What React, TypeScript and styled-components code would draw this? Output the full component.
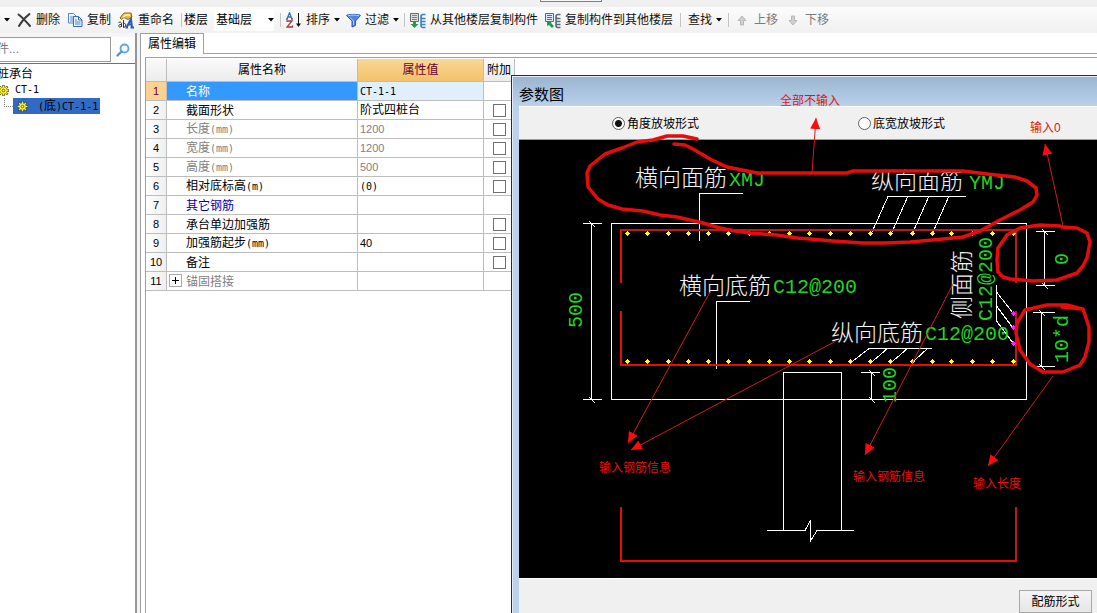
import React from "react";
import styled, { createGlobalStyle, css } from "styled-components";

const GlobalStyle = createGlobalStyle`
  *, *::before, *::after { box-sizing: border-box; }
  html, body, #root { height: 100%; margin: 0; }
  body {
    background: #ffffff;
    color: #000000;
    font: 12px/16px "Liberation Sans", "Noto Sans CJK SC", sans-serif;
    overflow: hidden;
  }
  button, input, select { font: inherit; color: inherit; margin: 0; }
`;

/* ---------- shared text ---------- */

const Latin = styled.span`
  font-family: "DejaVu Sans Mono", monospace;
  font-size: 10px;
`;

const Digits = styled.span`
  font-family: "Liberation Sans", sans-serif;
  font-size: 11px;
`;

/* Numbers and half-width runs get their own narrow faces, the rest the CJK face. */
const Mixed = ({ text }: { text: string }) => (
  <>
    {/^\d+$/.test(text) ? (
      <Digits>{text}</Digits>
    ) : (
      text.split(/([\x20-\x7e]+)/).map((part, i) => (i % 2 ? <Latin key={i}>{part}</Latin> : part))
    )}
  </>
);

/* ---------- frame ---------- */

const Frame = styled.div`
  display: flex;
  flex-direction: column;
  height: 100vh;
  overflow: hidden;
`;

const TopStrip = styled.div`
  display: flex;
  flex: none;
  height: 7px;
  padding-left: 540px;
  background: #f0f0f0;
`;

const StripTab = styled.div`
  width: 62px;
  height: 2px;
  border: 1px solid #808080;
  border-top: 0;
  background: #f8f8f8;
`;

const Toolbar = styled.div`
  display: flex;
  flex: none;
  align-items: center;
  height: 26px;
  margin-left: -24px;
  background: linear-gradient(#fcfcfc, #f0f0f0);
`;

const ToolButton = styled.button<{ $width: number; $muted?: boolean }>`
  display: flex;
  flex: none;
  align-items: center;
  gap: 4px;
  width: ${(p) => p.$width}px;
  height: 22px;
  padding: 0;
  border: 0;
  background: none;
  white-space: nowrap;
  color: ${(p) => (p.$muted ? "#7c7c7c" : "#111111")};
  svg { flex: none; }
`;

const Divider = styled.span<{ $gap?: number }>`
  flex: none;
  width: 1px;
  height: 14px;
  margin-right: ${(p) => p.$gap ?? 5}px;
  background: #c4c4c4;
`;

const FloorField = styled.label`
  display: flex;
  flex: none;
  align-items: center;
  gap: 6px;
  width: 96px;
`;

const SelectBox = styled.span`
  display: flex;
  align-items: center;
  width: 60px;
  height: 22px;
  padding-left: 2px;
  background: #ffffff;
`;

const FloorSelect = styled.select`
  appearance: none;
  width: 52px;
  padding: 0;
  border: 0;
  background: none;
`;

const Body = styled.div`
  display: flex;
  flex: 1;
  min-height: 0;
`;

/* ---------- sidebar ---------- */

const Sidebar = styled.aside`
  display: flex;
  flex: none;
  flex-direction: column;
  width: 165px;
  margin-left: -28px;
  padding-top: 4px;
  border-right: 2px solid #969696;
  background: #f6f6f6;
`;

const SearchRow = styled.div`
  display: flex;
  flex: none;
  height: 27px;
  border-bottom: 1px solid #707070;
  background: #ffffff;
`;

const SearchInput = styled.input`
  width: 139px;
  height: 25px;
  padding: 0 0 1px 12px;
  border: 1px solid #9a9a9a;
  background: #ffffff;
  &::placeholder { color: #777777; opacity: 1; }
`;

const SearchButton = styled.button`
  display: flex;
  flex: 1;
  align-items: center;
  justify-content: center;
  padding: 0;
  border: 0;
  background: none;
`;

const Tree = styled.ul`
  flex: 1;
  margin: 0;
  padding: 2px 0 0 25px;
  background: #ffffff;
  list-style: none;
`;

const TreeRow = styled.li<{ $depth: number }>`
  display: flex;
  align-items: center;
  height: 16px;
  padding-left: ${(p) => [0, 1, 7][p.$depth]}px;
  white-space: nowrap;
`;

const TreeNode = styled.span<{ $selected?: boolean }>`
  display: flex;
  align-items: center;
  gap: 6px;
  height: 16px;
  ${(p) =>
    p.$selected &&
    css`
      gap: 10px;
      width: 87px;
      padding-left: 4px;
      background: #316ac5;
    `}
`;

const Branch = styled.span`
  width: 9px;
  height: 9px;
  margin-bottom: 8px;
  border-left: 1px dotted #808080;
  border-bottom: 1px dotted #808080;
`;

const Splitter = styled.div`
  flex: none;
  width: 3px;
  background: #f2f2f2;
`;

/* ---------- property editor ---------- */

const Main = styled.main`
  position: relative;
  display: flex;
  flex: 1;
  flex-direction: column;
  min-width: 0;
  background: #ffffff;
`;

const TabStrip = styled.div`
  display: flex;
  flex: none;
  height: 21px;
  &::after {
    content: "";
    flex: 1;
    border-bottom: 1px solid #a0a0a0;
  }
`;

const Tab = styled.button`
  width: 64px;
  padding: 0;
  border: 1px solid #a0a0a0;
  border-bottom: 0;
  background: #ffffff;
`;

const TabBody = styled.div`
  flex: 1;
  padding: 3px 0 0 4px;
  border-left: 1px solid #a0a0a0;
`;

const GridFrame = styled.div`
  height: 100%;
  padding-top: 1px;
  border-top: 1px solid #a0a0a0;
  border-left: 1px solid #a0a0a0;
`;

const Table = styled.table`
  width: 369px;
  border-collapse: separate;
  border-spacing: 0;
  table-layout: fixed;
  th, td {
    padding: 0;
    border-right: 1px solid #bdbdbd;
    border-bottom: 1px solid #bdbdbd;
    font-weight: normal;
    white-space: nowrap;
  }
`;

const HeadCell = styled.th<{ $active?: boolean }>`
  height: 23px;
  line-height: 22px;
  background: ${(p) =>
    p.$active ? "linear-gradient(#fad795, #f2c26c)" : "linear-gradient(#fafafa, #ececec)"};
  color: ${(p) => (p.$active ? "#66002e" : "#000000")};
`;

const NumberCell = styled.th<{ $active?: boolean }>`
  height: 19px;
  line-height: 14px;
  background: ${(p) =>
    p.$active ? "#fdd291" : "linear-gradient(90deg, #ffffff, #efefef)"};
  color: ${(p) => (p.$active ? "#66002e" : "#000000")};
`;

type Tone = "plain" | "muted" | "link" | "selected";

const toneColor: Record<Tone, string> = {
  plain: "#000000",
  muted: "#808080",
  link: "#0000b4",
  selected: "#ffffff",
};

const NameCell = styled.td<{ $tone: Tone }>`
  background: ${(p) => (p.$tone === "selected" ? "#3399ff" : "#ffffff")};
  color: ${(p) => toneColor[p.$tone]};
`;

const NameLine = styled.div`
  display: flex;
  align-items: flex-end;
  height: 18px;
`;

const Gutter = styled.span`
  display: flex;
  width: 19px;
  padding: 0 0 3px 2px;
`;

const ExpandButton = styled.button`
  display: flex;
  align-items: center;
  justify-content: center;
  width: 13px;
  height: 13px;
  padding: 0;
  border: 1px solid #a8a8a8;
  background: #ffffff;
`;

const ValueCell = styled.td<{ $tone: Tone }>`
  background: ${(p) => (p.$tone === "selected" ? "#e0effe" : "#ffffff")};
  color: ${(p) => (p.$tone === "muted" ? "#808080" : "#000000")};
`;

const ValueText = styled.div`
  height: 18px;
  padding-left: 2px;
  line-height: 18px;
  white-space: pre;
`;

const CheckCell = styled.td`
  text-align: center;
  line-height: 0;
`;

const CheckBox = styled.input`
  appearance: none;
  width: 13px;
  height: 13px;
  border: 1px solid #707070;
  background: #ffffff;
`;

/* ---------- parameter window ---------- */

const ParamWindow = styled.section`
  position: absolute;
  top: 42px;
  right: 0;
  bottom: 0;
  left: 371px;
  display: flex;
  flex-direction: column;
  padding-left: 7px;
  border-top: 1px solid #2a2a38;
  border-left: 1px solid #2a2a38;
  background: linear-gradient(#9ab4d1, #b9d1ea 30px);
  box-shadow: inset 1px 1px 0 #e4edf7;
`;

const WindowTitle = styled.h2`
  flex: none;
  height: 30px;
  margin: 0;
  padding-top: 9px;
  font-size: 15px;
  line-height: 20px;
  font-weight: normal;
`;

const Options = styled.div`
  display: flex;
  flex: none;
  align-items: center;
  gap: 159px;
  height: 34px;
  padding: 1px 0 0 93px;
  border-top: 1px solid #ffffff;
  border-bottom: 1px solid #9a9a9a;
  background: #f0f0f0;
`;

const Option = styled.label`
  display: flex;
  align-items: center;
  gap: 2px;
  white-space: nowrap;
`;

const Radio = styled.input`
  appearance: none;
  width: 13px;
  height: 13px;
  border: 1px solid #606060;
  border-radius: 50%;
  background: #ffffff;
  &:checked { background: radial-gradient(circle, #111111 3px, #ffffff 4px); }
`;

const Canvas = styled.div`
  flex: 1;
  min-height: 0;
  background: #000000;
  svg {
    display: block;
    overflow: visible;
    pointer-events: none;
  }
`;

const WindowFooter = styled.footer`
  display: flex;
  flex: none;
  justify-content: flex-end;
  height: 35px;
  padding: 11px 5px 0 0;
  border-top: 1px solid #ffffff;
  background: #f0f0f0;
`;

const PushButton = styled.button`
  width: 73px;
  height: 23px;
  padding: 0;
  border: 1px solid #a8a8a8;
  background: linear-gradient(#f4f4f4, #e6e6e6);
`;

/* ---------- icons ---------- */

const Caret = () => (
  <svg width="6" height="4" viewBox="0 0 6 4" aria-hidden="true">
    <path d="M0 0h6L3 3.5z" fill="#000" />
  </svg>
);

const DeleteIcon = () => (
  <svg width="15" height="16" viewBox="0 0 15 16" aria-hidden="true">
    <path d="M1.500 2.500C5 5 9.500 10 13 14M12.500 2C8.500 5 4.500 9.500 2 14" fill="none" stroke="#3a3a3a" strokeWidth="2" strokeLinecap="round" />
  </svg>
);

const CopyIcon = () => (
  <svg width="16" height="16" viewBox="0 0 16 16" aria-hidden="true">
    <path d="M1.500 1.500h5l3 3v6.500h-8z" fill="#eef4fd" stroke="#5c86c0" />
    <path d="M3 5h4M3 7h4M3 9h3" stroke="#5c8fd6" />
    <path d="M6.500 4.500h5l3.500 3.500v6.500h-8.500z" fill="#eef4fd" stroke="#3c69b0" />
    <path d="M11.500 4.500V8H15" fill="none" stroke="#3c69b0" />
    <path d="M8 8h2M8 10h5.500M8 12h5.500" stroke="#4a80d0" />
  </svg>
);

const RenameIcon = () => (
  <svg width="16" height="17" viewBox="0 0 16 17" aria-hidden="true">
    <path d="M2 6l2.500-3.500L6 1h7l1 4-4 2.500-4-2-2.500 2z" fill="#e8b93c" stroke="#8a6a20" />
    <path d="M6.500 3H12M5 5l2-1" stroke="#fff3b8" strokeWidth="1.500" />
    <path d="M.5 10.500c2-1 3 0 3 1V15M3.500 12.500c-3-.5-3.500 2-2 2.500 1 0 2-.5 2-1M5.500 8v7.500M5.500 11.500c3-1 3 4 0 4" fill="none" stroke="#333" />
    <path d="M8.500 15.500L13 7l1 8.500M10.500 12.500h4M12.500 15.500H16M7.500 15.500H10" fill="none" stroke="#2a5cc0" strokeWidth="2" />
  </svg>
);

const SortIcon = () => (
  <svg width="16" height="16" viewBox="0 0 16 16" aria-hidden="true">
    <path d="M1 7L3.500 .8 6 7M2 5h3M0 7h2M5 7h2" fill="none" stroke="#3b6ea8" strokeWidth="1.300" />
    <path d="M1 10V9h5l-5 6h5.500v-1.500" fill="none" stroke="#a83a3a" strokeWidth="1.300" />
    <path d="M12.500 1v12" stroke="#111" />
    <path d="M10 11.500h5L12.500 15z" fill="#111" />
  </svg>
);

const FilterIcon = () => (
  <svg width="15" height="15" viewBox="0 0 15 15" aria-hidden="true">
    <path d="M.5 2.500C.5 1 14.500 1 14.500 2.500L9.500 8v4.500L6 14V8z" fill="#4f83e4" stroke="#2b59b8" />
    <path d="M2 2.800c3-1 8-1 11 0M4 4.500L7.500 8v4" fill="none" stroke="#b9d3ff" />
  </svg>
);

const FloorCopyIcon = ({ out }: { out?: boolean }) => (
  <svg width="16" height="17" viewBox="0 0 16 17" aria-hidden="true">
    <path d="M.5 1.500h8v8h-8z" fill={out ? "#dfeaff" : "#dedede"} stroke={out ? "#3c69c0" : "#6a6a6a"} />
    <path d="M2 3.500h5M2 5.500h5M2 7.500h5" stroke={out ? "#2f6fe0" : "#808080"} />
    <path d={out ? "M2 10l5-1-1 2 3 3-2 2-3-3-2 1z" : "M3 10v2H.5L4.500 16l4-4H6v-2z"} fill="#229a48" />
    <path
      d="M15.500 2.500H13q-2 0-2 2t2 2h2.500M11 4.500v9q0 2 2 2h2.500M11.500 9.500h4M11.500 12.500h4M12 6.500h3.500"
      fill="none"
      stroke={out ? "#5b6a78" : "#3b82c4"}
      strokeWidth="1.600"
    />
  </svg>
);

const MoveIcon = ({ down }: { down?: boolean }) => (
  <svg width="14" height="11" viewBox="-1 0 14 11" aria-hidden="true">
    <path d={down ? "M5 10L1 5.500h2.500V1h3v4.500H9z" : "M5 1L1 5.500h2.500V10h3V5.500H9z"} fill="#cfcfcf" stroke="#b8b8b8" />
  </svg>
);

const SearchIcon = () => (
  <svg width="14" height="14" viewBox="0 0 14 14" aria-hidden="true">
    <circle cx="8.500" cy="5.500" r="4" fill="#f4faff" stroke="#5aa5e0" strokeWidth="1.800" />
    <path d="M5.500 8.500L1.500 12.500" stroke="#4b97d8" strokeWidth="2.400" strokeLinecap="round" />
  </svg>
);

const GearIcon = () => (
  <svg width="11" height="11" viewBox="0 0 11 11" aria-hidden="true">
    <path d="M5.500 0v11M0 5.500h11M1.500 1.500l8 8M9.500 1.500l-8 8" stroke="#3a3a00" strokeWidth="2.400" />
    <path d="M5.500 .5v10M.5 5.500h10M2 2l7 7M9 2l-7 7" stroke="#ffee20" strokeWidth="1.400" />
    <circle cx="5.500" cy="5.500" r="3.200" fill="#ffee20" />
    <circle cx="5.500" cy="5.500" r="1.300" fill="#fff" stroke="#4a4a00" strokeWidth=".8" />
  </svg>
);

const PlusIcon = () => (
  <svg width="7" height="7" viewBox="0 0 7 7" aria-hidden="true">
    <path d="M3.500 0v7M0 3.500h7" stroke="#000" />
  </svg>
);

/* ---------- drawing ---------- */

const CadLabel = styled.text`
  fill: #f4f4f4;
  font-family: "Noto Sans CJK SC", sans-serif;
  font-size: 23px;
  font-weight: 300;
`;

const CadValue = styled.text`
  fill: #22d422;
  font-family: "Liberation Mono", monospace;
  font-size: 20px;
`;

const Note = styled.text`
  fill: #e01414;
  font-family: "Liberation Sans", "Noto Sans CJK SC", sans-serif;
  font-size: 12px;
`;

const barXs = [
  627, 647, 668, 688, 708, 728, 749, 769, 789, 809, 830, 850, 870, 890, 912, 932, 951, 972, 992, 1013,
];

const Dot = ({ x, y, fill }: { x: number; y: number; fill: string }) => (
  <path d={`M${x - 2} ${y}h5v1h-5zM${x - 1} ${y - 1}h3v3h-3zM${x} ${y - 2}h1v5h-1z`} fill={fill} />
);

/* Vertical dimension line with a tick and a slash at both ends. */
const Dimension = ({ x, from, to, left, right }: { x: number; from: number; to: number; left: number; right: number }) => (
  <path
    d={`M${x}.5 ${from}V${to}M${left} ${from}.5H${right}M${left} ${to}.5H${right}M${x - 2} ${from - 2}l6 6M${x - 2} ${to - 2}l6 6`}
    fill="none"
    stroke="#fff"
  />
);

const arrows = [
  [812, 173, 816, 118],
  [1063, 226, 1045, 144],
  [1053, 376, 988, 466],
  [953, 284, 865, 455],
  [710, 292, 628, 443],
  [836, 341, 631, 450],
];

const FootingDrawing = () => (
  <svg width="578" height="438" viewBox="519 140 578 438" role="img" aria-label="参数图">
    <defs>
      <marker id="head" markerUnits="userSpaceOnUse" markerWidth="12" markerHeight="10" refX="11" refY="5" orient="auto">
        <path d="M0 0L11 5L0 10z" fill="#ff0a0a" />
      </marker>
    </defs>

    <g shapeRendering="crispEdges">
      <g fill="none" stroke="#fff">
        <path d="M611.500 223.500h415v176h-415z" />
        <path d="M743 193.500H699.500V241" />
        <path d="M750 301.500H716.500V369" />
        <path d="M966 196.500H888L872 232M908 196L892 232M929 196L913 232M949 196L933 232" />
        <path d="M932 348.500H869L853 361M888 348L873 361M908 348L893 361M928 348L914 361" />
        <path d="M996.500 285V321L1013 343M996.500 292L1013 313M996.500 306L1013 328" />
        <path d="M783.500 530V372.500H841.500V530" />
        <path d="M767 530.500H805L810.500 520V541L817 530.500H854" />
      </g>
      <Dimension x={591} from={223} to={399} left={583} right={602} />
      <Dimension x={871} from={372} to={399} left={861} right={880} />
      <Dimension x={1044} from={231} to={285} left={1036} right={1055} />
      <Dimension x={1041} from={312} to={366} left={1033} right={1055} />

      <g fill="none" strokeWidth="2">
        <path d="M620 230H1017M1016 230V283M1016 311V365M1016 507V561" stroke="#b81c1c" />
        <path d="M621 230V283M621 311V365H1017M621 507V561H1017" stroke="#ea0a0a" />
      </g>

      {barXs.map((x) => (
        <React.Fragment key={x}>
          <Dot x={x} y={233} fill="#ffff20" />
          <Dot x={x} y={361} fill="#ffff20" />
        </React.Fragment>
      ))}
      {[313, 327, 343].map((y) => (
        <Dot key={y} x={1013} y={y} fill="#ff20ff" />
      ))}
    </g>

    <CadLabel x="635" y="186">横向面筋</CadLabel>
    <CadValue x="729" y="186">XMJ</CadValue>
    <CadLabel x="871" y="189">纵向面筋</CadLabel>
    <CadValue x="969" y="189">YMJ</CadValue>
    <CadLabel x="679" y="294">横向底筋</CadLabel>
    <CadValue x="773" y="293">C12@200</CadValue>
    <CadLabel x="831" y="341">纵向底筋</CadLabel>
    <CadValue x="925" y="340">C12@200</CadValue>
    <CadLabel transform="translate(970 319) rotate(-90)">侧面筋</CadLabel>
    <CadValue transform="translate(992 321) rotate(-90)">C12@200</CadValue>
    <CadValue transform="translate(582 328) rotate(-90)">500</CadValue>
    <CadValue transform="translate(896 403) rotate(-90)">100</CadValue>
    <CadValue transform="translate(1068 265) rotate(-90)">0</CadValue>
    <CadValue transform="translate(1068 363) rotate(-90)">10*d</CadValue>

    <g fill="none" stroke="#e40c0c" strokeWidth="3.500" strokeLinejoin="round" strokeLinecap="round">
      <path d="M697 139L683 136H667L653 140L637 142L622 148L605 154L590 166L587 173L588 187L598 199L608 205L622 209L643 211L660 215L677 217L703 223L720 228L735 231L750 233L777 235L797 238L810 239L833 241L863 243H885L910 242L943 239L963 237L980 231L1000 220L1020 210L1033 202L1037 195L1036 188L1027 181L1015 177L987 174L963 171H853L847 173H757L727 167L710 159L693 149L685 145L674 144" />
      <path d="M1060 226L1040 225L1020 228L1007 235L998 248L997 260L998 272L1003 277L1010 279L1033 281L1057 280L1077 273L1083 266L1087 258L1090 242L1087 233L1077 228L1062 227" />
      <path d="M1062 307L1083 309L1089 327V342L1085 357L1080 365L1063 372H1043L1030 364L1020 350L1016 333L1017 323L1025 310L1047 305H1067L1082 309" />
    </g>

    {arrows.map(([x1, y1, x2, y2]) => (
      <line key={x2} x1={x1} y1={y1} x2={x2} y2={y2} stroke="#d01c1c" markerEnd="url(#head)" />
    ))}

    <Note x="780" y="105">全部不输入</Note>
    <Note x="1030" y="132">输入0</Note>
    <Note x="599" y="472">输入钢筋信息</Note>
    <Note x="853" y="481">输入钢筋信息</Note>
    <Note x="973" y="488">输入长度</Note>
  </svg>
);

/* ---------- data ---------- */

type Row = { name: string; value: string; tone: Tone; check: boolean; expandable?: boolean };

const rows: Row[] = [
  { name: "名称", value: "CT-1-1", tone: "selected", check: false },
  { name: "截面形状", value: "阶式四桩台", tone: "plain", check: true },
  { name: "长度(mm)", value: "1200", tone: "muted", check: true },
  { name: "宽度(mm)", value: "1200", tone: "muted", check: true },
  { name: "高度(mm)", value: "500", tone: "muted", check: true },
  { name: "相对底标高(m)", value: "(0)", tone: "plain", check: true },
  { name: "其它钢筋", value: "", tone: "link", check: false },
  { name: "承台单边加强筋", value: "", tone: "plain", check: true },
  { name: "加强筋起步(mm)", value: "40", tone: "plain", check: true },
  { name: "备注", value: "", tone: "plain", check: true },
  { name: "锚固搭接", value: "", tone: "muted", check: false, expandable: true },
];

export default function App() {
  return (
    <Frame>
      <GlobalStyle />
      <TopStrip>
        <StripTab />
      </TopStrip>
      <Toolbar role="toolbar">
        <ToolButton $width={41}>
          新建
          <Caret />
        </ToolButton>
        <ToolButton $width={50}><DeleteIcon />删除</ToolButton>
        <ToolButton $width={51}><CopyIcon />复制</ToolButton>
        <ToolButton $width={63}><RenameIcon />重命名</ToolButton>
        <Divider $gap={2} />
        <FloorField>
          楼层
          <SelectBox>
            <FloorSelect defaultValue="基础层">
              <option>基础层</option>
            </FloorSelect>
            <Caret />
          </SelectBox>
        </FloorField>
        <Divider />
        <ToolButton $width={60}><SortIcon />排序<Caret /></ToolButton>
        <ToolButton $width={58}><FilterIcon />过滤<Caret /></ToolButton>
        <Divider />
        <ToolButton $width={135}><FloorCopyIcon />从其他楼层复制构件</ToolButton>
        <ToolButton $width={135}><FloorCopyIcon out />复制构件到其他楼层</ToolButton>
        <Divider $gap={7} />
        <ToolButton $width={40}>查找<Caret /></ToolButton>
        <Divider $gap={7} />
        <ToolButton $width={51} $muted><MoveIcon />上移</ToolButton>
        <ToolButton $width={51} $muted><MoveIcon down />下移</ToolButton>
      </Toolbar>

      <Body>
        <Sidebar>
          <SearchRow>
            <SearchInput type="text" placeholder="构件..." aria-label="搜索构件" />
            <SearchButton aria-label="搜索"><SearchIcon /></SearchButton>
          </SearchRow>
          <Tree>
            <TreeRow $depth={0}>桩承台</TreeRow>
            <TreeRow $depth={1}>
              <TreeNode>
                <GearIcon />
                <Mixed text="CT-1" />
              </TreeNode>
            </TreeRow>
            <TreeRow $depth={2}>
              <Branch />
              <TreeNode $selected>
                <GearIcon />
                <span><Mixed text="(底)CT-1-1" /></span>
              </TreeNode>
            </TreeRow>
          </Tree>
        </Sidebar>
        <Splitter />
        <Main>
          <TabStrip>
            <Tab>属性编辑</Tab>
          </TabStrip>
          <TabBody>
            <GridFrame>
              <Table>
                <colgroup>
                  <col width="21" />
                  <col width="191" />
                  <col width="126" />
                  <col width="31" />
                </colgroup>
                <thead>
                  <tr>
                    <HeadCell />
                    <HeadCell>属性名称</HeadCell>
                    <HeadCell $active>属性值</HeadCell>
                    <HeadCell>附加</HeadCell>
                  </tr>
                </thead>
                <tbody>
                  {rows.map((row, i) => (
                    <tr key={row.name}>
                      <NumberCell $active={i === 0}>
                        <Digits>{i + 1}</Digits>
                      </NumberCell>
                      <NameCell $tone={row.tone}>
                        <NameLine>
                          <Gutter>
                            {row.expandable && (
                              <ExpandButton aria-label="展开"><PlusIcon /></ExpandButton>
                            )}
                          </Gutter>
                          <span><Mixed text={row.name} /></span>
                        </NameLine>
                      </NameCell>
                      <ValueCell $tone={row.tone}>
                        <ValueText><Mixed text={row.value} /></ValueText>
                      </ValueCell>
                      <CheckCell>
                        {row.check && <CheckBox type="checkbox" aria-label={`附加 ${row.name}`} />}
                      </CheckCell>
                    </tr>
                  ))}
                </tbody>
              </Table>
            </GridFrame>
          </TabBody>

          <ParamWindow>
            <WindowTitle>参数图</WindowTitle>
            <Options>
              <Option>
                <Radio type="radio" name="slope" defaultChecked />
                角度放坡形式
              </Option>
              <Option>
                <Radio type="radio" name="slope" />
                底宽放坡形式
              </Option>
            </Options>
            <Canvas>
              <FootingDrawing />
            </Canvas>
            <WindowFooter>
              <PushButton>配筋形式</PushButton>
            </WindowFooter>
          </ParamWindow>
        </Main>
      </Body>
    </Frame>
  );
}
